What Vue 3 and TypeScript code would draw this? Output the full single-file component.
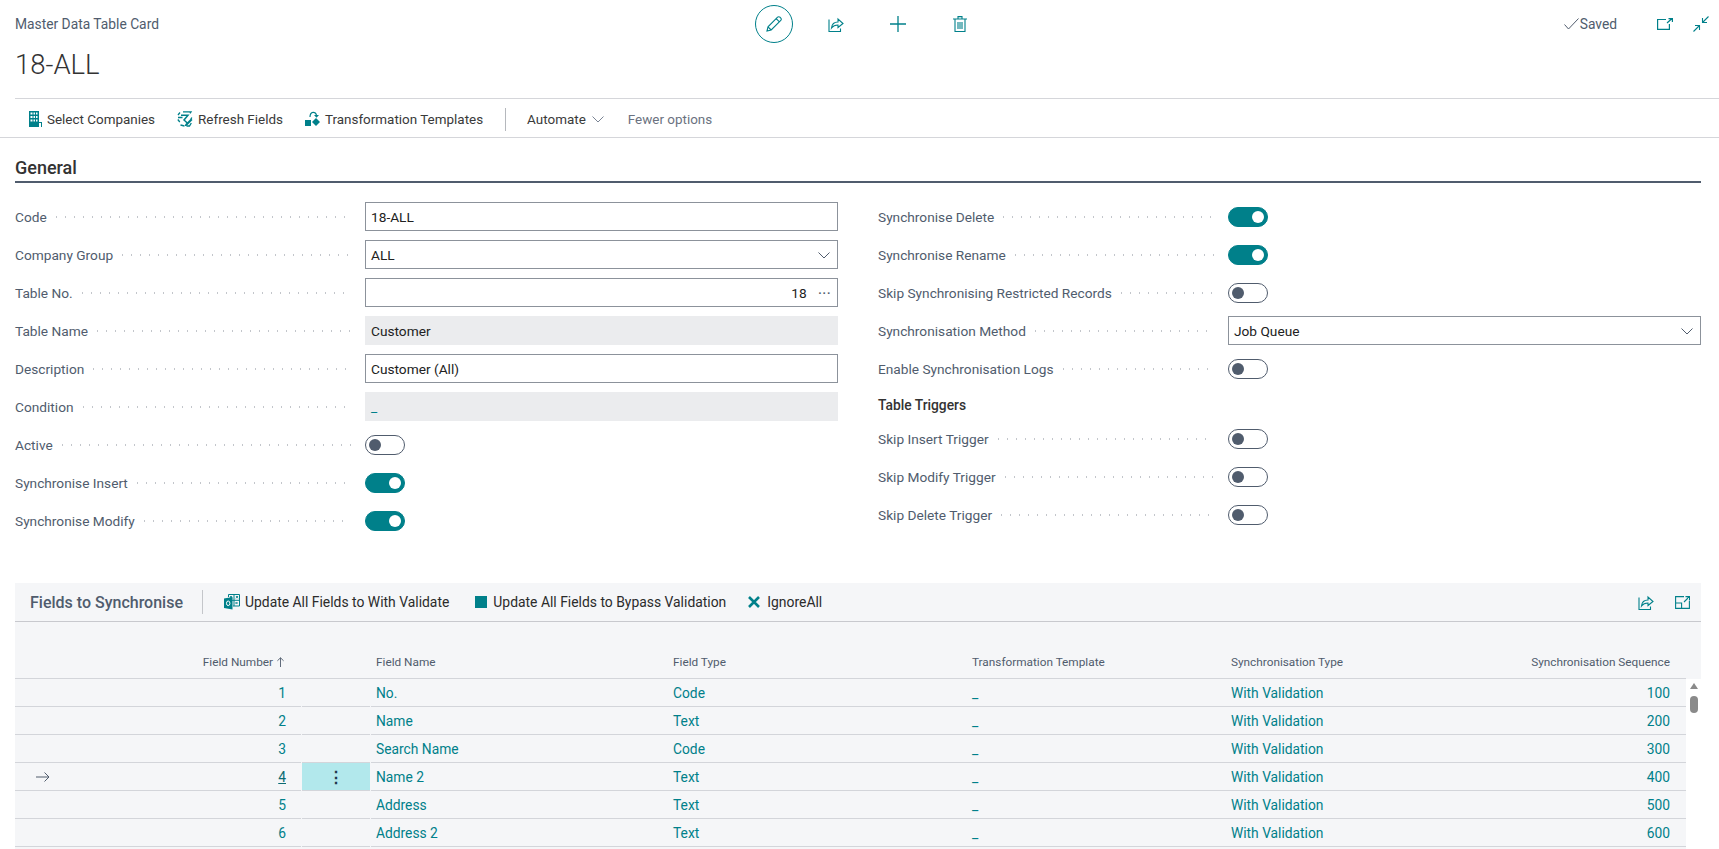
<script setup lang="ts">
interface FieldRow { label: string; kind: 'text' | 'select' | 'lookup' | 'readonly' | 'link' | 'toggle'; value?: string; on?: boolean }
interface TableRow { no: number; name: string; type: string; seq: number; active?: boolean }

const leftRows: FieldRow[] = [
  { label: 'Code', kind: 'text', value: '18-ALL' },
  { label: 'Company Group', kind: 'select', value: 'ALL' },
  { label: 'Table No.', kind: 'lookup', value: '18' },
  { label: 'Table Name', kind: 'readonly', value: 'Customer' },
  { label: 'Description', kind: 'text', value: 'Customer (All)' },
  { label: 'Condition', kind: 'link', value: '_' },
  { label: 'Active', kind: 'toggle', on: false },
  { label: 'Synchronise Insert', kind: 'toggle', on: true },
  { label: 'Synchronise Modify', kind: 'toggle', on: true },
]
const rightRows: FieldRow[] = [
  { label: 'Synchronise Delete', kind: 'toggle', on: true },
  { label: 'Synchronise Rename', kind: 'toggle', on: true },
  { label: 'Skip Synchronising Restricted Records', kind: 'toggle', on: false },
  { label: 'Synchronisation Method', kind: 'select', value: 'Job Queue' },
  { label: 'Enable Synchronisation Logs', kind: 'toggle', on: false },
]
const triggerRows: FieldRow[] = [
  { label: 'Skip Insert Trigger', kind: 'toggle', on: false },
  { label: 'Skip Modify Trigger', kind: 'toggle', on: false },
  { label: 'Skip Delete Trigger', kind: 'toggle', on: false },
]
const tableRows: TableRow[] = [
  { no: 1, name: 'No.', type: 'Code', seq: 100 },
  { no: 2, name: 'Name', type: 'Text', seq: 200 },
  { no: 3, name: 'Search Name', type: 'Code', seq: 300 },
  { no: 4, name: 'Name 2', type: 'Text', seq: 400, active: true },
  { no: 5, name: 'Address', type: 'Text', seq: 500 },
  { no: 6, name: 'Address 2', type: 'Text', seq: 600 },
]
const groups: { rows: FieldRow[]; title?: string }[][] = [
  [{ rows: leftRows }],
  [{ rows: rightRows }, { rows: triggerRows, title: 'Table Triggers' }],
]
</script>

<template>
  <div class="page">
    <header class="topbar">
      <div class="crumb">Master Data Table Card</div>
      <div class="actions">
        <button class="act">
          <span class="circle">
            <svg width="16" height="16" viewBox="0 0 16 16" fill="none" stroke="#00808a" stroke-width="1.1"><path d="M1 15l1-4.2L11.6 1.2a1.6 1.6 0 0 1 2.3 0l.9.9a1.6 1.6 0 0 1 0 2.3L5.2 14zM2 10.800l3.200 3.200M10.200 2.600l3.200 3.200"/></svg>
          </span>
        </button>
        <button class="act">
          <svg width="16" height="15" viewBox="0 0 16 15" fill="none" stroke="#00808a" stroke-width="1.1"><path d="M1 2.500v12h11.500v-3M3.500 11c.4-3.800 3-6 6.500-6V2l5 4.500L10 10.500V8C7 8 5 9 3.500 11z"/></svg>
        </button>
        <button class="act">
          <svg width="16" height="16" viewBox="0 0 16 16" stroke="#00808a" stroke-width="1.3"><path d="M8 0v16M0 8h16"/></svg>
        </button>
        <button class="act">
          <svg width="14" height="16" viewBox="0 0 14 16" fill="none" stroke="#00808a" stroke-width="1.1"><path d="M0 3h14M2 3v12.500h10V3M5 3V.6h4V3M5 6v7M7 6v7M9 6v7"/></svg>
        </button>
      </div>
      <div class="status">
        <svg class="check" width="15" height="12" viewBox="0 0 15 12" fill="none" stroke="#505c6d" stroke-width="1"><path d="M.5 6.500l4 4.500L14.500 .5"/></svg>
        <span class="saved">Saved</span>
        <svg class="open" width="16" height="12" viewBox="0 0 16 12" fill="none" stroke="#00808a" stroke-width="1.200"><path d="M9 1.500H.6v9.900h11.800V6M10 5l5-4.500M11.500 .6H15.400V4"/></svg>
        <svg class="shrink" width="16" height="16" viewBox="0 0 16 16" fill="none" stroke="#00808a" stroke-width="1.100"><path d="M15.500 .5L9.500 6.500M9.500 2v4.500H14M.5 15.500l6-6M2 9.500h4.500V14"/></svg>
      </div>
    </header>

    <h1 class="title">18-ALL</h1>

    <nav class="toolbar">
      <span class="tool">
        <svg width="13" height="16" viewBox="0 0 13 16" fill="#00808a"><path d="M0 0h10v16H0z"/><path fill="#fff" d="M1.500 1.500h2v2h-2zM4.500 1.500h1.500v2H4.500zM7 1.500h1.500v2H7zM1.500 5h2v2h-2zM4.500 5h1.500v2H4.500zM7 5h1.500v2H7zM1.500 8.500h2v2h-2zM4.500 8.500h1.500v2H4.500zM7 8.500h1.500v2H7z"/><path d="M10 11h3v5h-1v-4h-2z"/></svg>
        Select Companies
      </span>
      <span class="tool">
        <svg width="16" height="16" viewBox="0 0 16 16" fill="none" stroke="#00808a" stroke-width="1.300"><path d="M6 .8h8l-1 1.500M3 1.500L1 4M1 6.500h4.500M.8 8.500l2 2.500M3.500 14l4 1M9.500 15h3l1.800-3M14.800 6.500l-1 2"/><path d="M4 4.200h7L7 9l3.500 3.300" stroke-width="1.500"/><path d="M8 13.500l6-6 1.500 1.500-6 6H8z" fill="#00808a" stroke="none"/></svg>
        Refresh Fields
      </span>
      <span class="tool">
        <svg width="15" height="16" viewBox="0 0 15 16" fill="#00808a"><path d="M0 9h6v6H0z"/><path d="M11 7l4 4-4 4-4-4z"/><path d="M5 6c0-6 6-6 6.500-1.500" fill="none" stroke="#00808a" stroke-width="1.200"/><path d="M9 4h5l-2.500 2.800z"/></svg>
        Transformation Templates
      </span>
      <span class="tool-sep"></span>
      <span class="tool plain auto">
        Automate
        <svg width="12" height="7" viewBox="0 0 12 7" fill="none" stroke="#7a8494" stroke-width="1"><path d="M.5 .5L6 6l5.500-5.500"/></svg>
      </span>
      <span class="tool plain muted">Fewer options</span>
    </nav>

    <section class="general">
      <h2 class="section-title">General</h2>
      <div class="form">
        <div v-for="(col, i) in groups" :key="i" class="col">
          <template v-for="(grp, g) in col" :key="g">
            <div v-if="grp.title" class="subhead">{{ grp.title }}</div>
            <div v-for="row in grp.rows" :key="row.label" class="row">
              <div class="label-wrap">
                <span class="label">{{ row.label }}</span>
                <span class="dots"></span>
              </div>
              <div v-if="row.kind === 'toggle'" class="value">
                <span class="toggle" :class="{ on: row.on }"><span class="knob"></span></span>
              </div>
              <div v-else class="value">
                <div class="field" :class="row.kind">
                  <span class="field-text">{{ row.value }}</span>
                  <svg v-if="row.kind === 'select'" width="12" height="7" viewBox="0 0 12 7" fill="none" stroke="#505c6d" stroke-width="1"><path d="M.5 .5L6 6l5.500-5.500"/></svg>
                  <span v-if="row.kind === 'lookup'" class="more">···</span>
                </div>
              </div>
            </div>
          </template>
        </div>
      </div>
    </section>

    <section class="panel">
      <div class="panel-bar">
        <span class="panel-title">Fields to Synchronise</span>
        <span class="panel-sep"></span>
        <span class="tool dark">
          <svg width="16" height="16" viewBox="0 0 16 16" fill="none" stroke="#00808a"><path d="M4.500 3V.5h11v11.500H9M10 .5v11.500M4.500 6.300h11"/><path d="M6 2l2 2.300M8 2L6 4.300M12 2l2 2.300M14 2l-2 2.300M11.500 8l2 2M13.500 8l-2 2" stroke-width=".9"/><path d="M0 4.500L8.500 3v12.500L0 14z" fill="#00808a" stroke="none"/><ellipse cx="4.200" cy="9.300" rx="1.700" ry="2.300" stroke="#fff" stroke-width="1"/></svg>
          Update All Fields to With Validate
        </span>
        <span class="tool dark stop">
          <span class="square"></span>
          Update All Fields to Bypass Validation
        </span>
        <span class="tool dark ignore">
          <svg width="12" height="12" viewBox="0 0 12 12" stroke="#00808a" stroke-width="2.600"><path d="M1 1l10 10M11 1L1 11"/></svg>
          IgnoreAll
        </span>
        <span class="panel-icons">
          <svg width="16" height="15" viewBox="0 0 16 15" fill="none" stroke="#00808a" stroke-width="1.100"><path d="M1 2.500v12h11.500v-3M3.500 11c.4-3.800 3-6 6.500-6V2l5 4.500L10 10.500V8C7 8 5 9 3.500 11z"/></svg>
          <svg width="15" height="13" viewBox="0 0 15 13" fill="none" stroke="#00808a" stroke-width="1.100"><path d="M9 .6H.6v11.800h13.800V5M.6 7h6v5.400M9 6l5.500-5.500M10.500 .6h4V4.500"/></svg>
        </span>
      </div>

      <div class="grid-row grid-head">
        <div class="cell num">
          Field Number
          <svg class="up" width="7" height="10" viewBox="0 0 7 10" fill="none" stroke="#505c6d" stroke-width=".9"><path d="M3.500 10V.8M.4 3.800L3.500 .8l3.100 3"/></svg>
        </div>
        <div class="cell"></div>
        <div class="cell">Field Name</div>
        <div class="cell">Field Type</div>
        <div class="cell">Transformation Template</div>
        <div class="cell">Synchronisation Type</div>
        <div class="cell seq">Synchronisation Sequence</div>
      </div>

      <div class="body">
        <div class="rows">
          <div v-for="r in tableRows" :key="r.no" class="grid-row data">
            <div class="cell num">
              <svg v-if="r.active" class="arrow" width="14" height="10" viewBox="0 0 14 10" fill="none" stroke="#505c6d" stroke-width="1"><path d="M0 5h13M8.500 .5L13 5l-4.500 4.500"/></svg>
              <span :class="{ current: r.active }">{{ r.no }}</span>
            </div>
            <div class="cell menu" :class="{ hot: r.active }"><span v-if="r.active" class="vdots">⋮</span></div>
            <div class="cell">{{ r.name }}</div>
            <div class="cell">{{ r.type }}</div>
            <div class="cell">_</div>
            <div class="cell">With Validation</div>
            <div class="cell seq">{{ r.seq }}</div>
          </div>
        </div>
        <div class="scroll">
          <span class="tri"></span>
          <span class="thumb"></span>
        </div>
      </div>
    </section>
  </div>
</template>

<style>
html, body { margin: 0; background: #fff; overflow: hidden; }
</style>

<style scoped>
.page {
  height: 849px;
  width: 1719px;
  display: flex;
  flex-direction: column;
  overflow: hidden;
  font-family: Roboto, "Open Sans", sans-serif;
  font-size: 13.800px;
  color: #212121;
  background: #fff;
}
.topbar {
  height: 48px;
  display: grid;
  grid-template-columns: 743px auto 1fr;
  align-items: center;
}
.crumb { padding-left: 15px; font-size: 13.800px; color: #505c6d; }
.actions { display: flex; align-items: center; }
.act {
  width: 62px;
  height: 38px;
  padding: 0;
  border: 0;
  background: none;
  display: flex;
  align-items: center;
  justify-content: center;
}
.circle {
  width: 36px;
  height: 36px;
  border: 1px solid #00808a;
  border-radius: 50%;
  display: flex;
  align-items: center;
  justify-content: center;
}
.status { display: flex; align-items: center; justify-content: flex-end; padding-right: 10px; }
.check { margin-right: 1px; }
.saved { color: #505c6d; margin-right: 40px; }
.shrink { margin-left: 20px; }
.title {
  margin: 0;
  height: 50px;
  box-sizing: border-box;
  padding: 0 0 0 15px;
  font-size: 27.500px;
  font-weight: 300;
  line-height: 34px;
  color: #333;
}
.toolbar {
  margin-left: 15px;
  border-top: 1px solid #d5d6da;
  display: flex;
  align-items: center;
  padding: 2px 0 0 14px;
  height: 36px;
  font-size: 13.450px;
  position: relative;
}
.toolbar::after {
  content: "";
  position: absolute;
  left: -15px;
  right: 0;
  bottom: -1px;
  height: 1px;
  background: #d5d6da;
}
.tool { display: inline-flex; align-items: center; gap: 5px; margin-right: 22px; color: #3a3a3a; white-space: nowrap; }
.tool-sep { width: 1px; height: 23px; background: #b5b8bd; margin: 0 21px 0 0; }
.plain.auto { gap: 6px; margin-right: 24px; }
.muted { color: #6b7280; }
.general { margin: 1px 18px 0 15px; }
.section-title {
  margin: 0;
  height: 45px;
  box-sizing: border-box;
  padding-top: 17px;
  font-size: 18px;
  font-weight: 500;
  line-height: 25px;
  color: #333;
  border-bottom: 2px solid #505c6d;
}
.form {
  display: grid;
  grid-template-columns: 823px 823px;
  column-gap: 40px;
  margin-top: 15px;
}
.row { height: 38px; display: flex; align-items: center; }
.label-wrap { width: 350px; flex: none; display: flex; align-items: center; padding-right: 14px; box-sizing: border-box; }
.label { color: #505c6d; white-space: nowrap; font-size: 13.700px; }
.dots {
  flex: 1;
  height: 2px;
  margin-left: 9px;
  background-image: linear-gradient(to right, #c3c6cb 1.500px, transparent 1.500px);
  background-size: 9px 2px;
}
.value { flex: 1; display: flex; align-items: center; }
.field {
  flex: 1;
  height: 29px;
  margin-bottom: 1px;
  box-sizing: border-box;
  border: 1px solid #8c929b;
  display: flex;
  align-items: center;
  justify-content: space-between;
  padding: 1px 5px 0;
  font-size: 13.700px;
}
.field.readonly, .field.link { background: #ebecee; border-color: #ebecee; }
.field.link { color: #00808a; }
.field.select { padding-right: 7px; }
.field.lookup { justify-content: flex-end; padding-right: 6px; }
.more { margin-left: 11px; font-size: 17px; line-height: 1; color: #505c6d; }
.toggle {
  width: 40px;
  height: 20px;
  box-sizing: border-box;
  border: 1px solid #505c6d;
  border-radius: 10px;
  display: flex;
  align-items: center;
  padding: 0 3px;
  background: #fff;
}
.knob { width: 12px; height: 12px; border-radius: 50%; background: #505c6d; }
.toggle.on { background: #00808a; border-color: #00808a; justify-content: flex-end; }
.toggle.on .knob { background: #fff; }
.subhead { height: 32px; box-sizing: border-box; padding-top: 2px; display: flex; align-items: center; font-weight: 500; font-size: 13.800px; color: #333; }
.panel {
  margin: 43px 18px 0 15px;
  flex: 1;
  min-height: 0;
  display: flex;
  flex-direction: column;
  background: #f5f6f8;
}
.panel-bar {
  height: 38px;
  flex: none;
  border-bottom: 1px solid #c8c9ce;
  display: flex;
  align-items: center;
  padding-left: 15px;
  font-size: 13.900px;
}
.panel-title { font-size: 16px; font-weight: 500; color: #505c6d; width: 153px; white-space: nowrap; }
.panel-sep { width: 1px; height: 24px; background: #c4c6ca; margin: 0 21px 0 19px; }
.dark { color: #2b2b2b; margin-right: 0; }
.stop { margin-left: 26px; gap: 6px; }
.square { width: 12px; height: 12px; background: #00808a; }
.ignore { margin-left: 22px; gap: 7px; }
.panel-icons { margin-left: auto; padding-right: 11px; display: flex; align-items: center; gap: 21px; }
.grid-row {
  display: grid;
  grid-template-columns: 287px 69px 297px 299px 259px 255px 1fr;
}
.grid-head {
  height: 57px;
  flex: none;
  box-sizing: border-box;
  margin-right: 15px;
  border-bottom: 1px solid #d3d5da;
  font-size: 11.800px;
  color: #505c6d;
}
.grid-head .cell { padding: 31px 0 0 5px; line-height: 18px; white-space: nowrap; }
.grid-head .cell.num { padding: 31px 18px 0 0; text-align: right; }
.grid-head .cell.seq { padding: 31px 16px 0 0; text-align: right; }
.up { margin-left: 1px; vertical-align: -1px; }
.body { flex: 1; min-height: 0; display: flex; background: #fff; }
.rows { flex: 1; background: #f5f6f8; overflow: hidden; }
.data { height: 28px; color: #00808a; font-size: 13.800px; }
.data .cell {
  height: 28px;
  box-sizing: border-box;
  border-bottom: 1px solid #d3d5da;
  padding-left: 5px;
  line-height: 29px;
}
.data .cell.num { position: relative; text-align: right; padding: 0 15px 0 0; margin-right: 1px; }
.data .cell.menu { padding: 0; text-align: center; margin-right: 1px; }
.data .cell.hot { background: #b2e8ec; }
.vdots { color: #1f3a4d; font-size: 16px; font-weight: 700; }
.data .cell.seq { text-align: right; padding: 0 16px 0 0; }
.current { color: #0b6b73; text-decoration: underline; }
.arrow { position: absolute; left: 21px; top: 9px; }
.scroll { width: 15px; flex: none; background: #fff; display: flex; flex-direction: column; align-items: center; }
.tri { margin-top: 4px; width: 0; height: 0; border-left: 4px solid transparent; border-right: 4px solid transparent; border-bottom: 6px solid #8a8a8a; }
.thumb { margin-top: 7px; width: 8px; height: 17px; border-radius: 4px; background: #8a8a8a; }
</style>
